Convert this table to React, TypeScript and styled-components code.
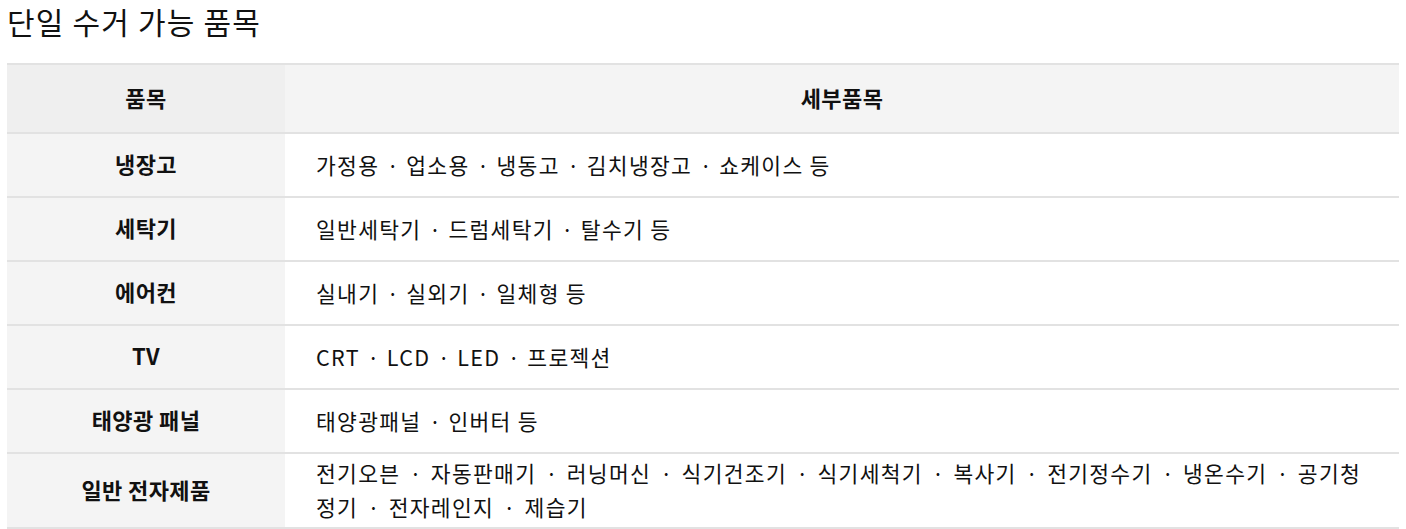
import React from 'react';
import styled, { createGlobalStyle } from 'styled-components';

const GlobalStyle = createGlobalStyle`
  body {
    margin: 0;
    background: #fff;
    font-family: 'Noto Sans CJK KR', 'Noto Sans', sans-serif;
    color: #111;
  }
`;

const Page = styled.div`
  padding: 0 7px;
`;

const Title = styled.h2`
  margin: 0;
  font-size: 30px;
  font-weight: 400;
  line-height: 42px;
  letter-spacing: 1.2px;
`;

const Table = styled.table`
  width: 100%;
  margin-top: 21px;
  border-collapse: collapse;
  border-top: 2px solid #e2e2e2;
  table-layout: fixed;
`;

const HeadCell = styled.th<{ $first?: boolean }>`
  height: 63px;
  padding: 0 0 4px;
  font-size: 22px;
  font-weight: 700;
  letter-spacing: 0.4px;
  text-align: center;
  background: ${({ $first }) => ($first ? '#efefef' : '#f4f4f4')};
  border-bottom: 2px solid #e2e2e2;
  width: ${({ $first }) => ($first ? '278px' : 'auto')};
`;

const NameCell = styled.td`
  padding: 0 0 4px;
  font-size: 22px;
  font-weight: 700;
  letter-spacing: 0.4px;
  text-align: center;
  background: #f4f4f4;
  border-bottom: 2px solid #e2e2e2;
  height: 58px;
`;

const DetailCell = styled.td`
  padding: 2px 30px 3px 31px;
  font-size: 21.5px;
  line-height: 34px;
  letter-spacing: 1.3px;
  background: #fff;
  border-bottom: 2px solid #e2e2e2;
  word-break: break-all;
`;

const Sep = styled.span<{ $wide?: boolean }>`
  display: inline-block;
  width: ${({ $wide }) => ($wide ? '30.5px' : '27px')};
  text-align: center;
  letter-spacing: 0;
`;

const items: { name: string; parts: string[]; wide?: boolean }[] = [
  { name: '냉장고', parts: ['가정용', '업소용', '냉동고', '김치냉장고', '쇼케이스 등'] },
  { name: '세탁기', parts: ['일반세탁기', '드럼세탁기', '탈수기 등'] },
  { name: '에어컨', parts: ['실내기', '실외기', '일체형 등'] },
  { name: 'TV', parts: ['CRT', 'LCD', 'LED', '프로젝션'] },
  { name: '태양광 패널', parts: ['태양광패널', '인버터 등'] },
  {
    name: '일반 전자제품',
    wide: true,
    parts: [
      '전기오븐',
      '자동판매기',
      '러닝머신',
      '식기건조기',
      '식기세척기',
      '복사기',
      '전기정수기',
      '냉온수기',
      '공기청정기',
      '전자레인지',
      '제습기',
    ],
  },
];

export default function App() {
  return (
    <Page>
      <GlobalStyle />
      <Title>단일 수거 가능 품목</Title>
      <Table>
        <thead>
          <tr>
            <HeadCell $first>품목</HeadCell>
            <HeadCell>세부품목</HeadCell>
          </tr>
        </thead>
        <tbody>
          {items.map((it) => (
            <tr key={it.name}>
              <NameCell>{it.name}</NameCell>
              <DetailCell>
                {it.parts.map((p, i) => (
                  <React.Fragment key={p}>
                    {i > 0 && <Sep $wide={it.wide}>·</Sep>}
                    {p}
                  </React.Fragment>
                ))}
              </DetailCell>
            </tr>
          ))}
        </tbody>
      </Table>
    </Page>
  );
}
